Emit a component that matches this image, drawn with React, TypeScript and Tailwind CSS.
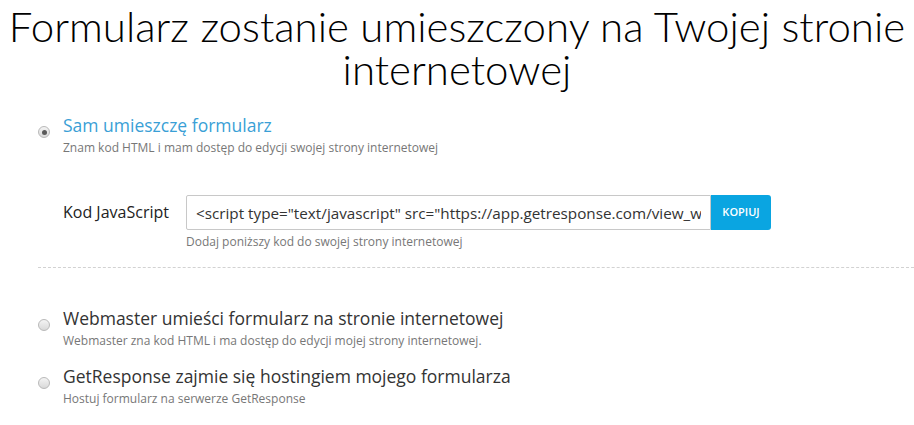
import { useState } from "react";

const options = [
  {
    id: "self",
    label: "Sam umieszczę formularz",
    hint: "Znam kod HTML i mam dostęp do edycji swojej strony internetowej",
  },
  {
    id: "webmaster",
    label: "Webmaster umieści formularz na stronie internetowej",
    hint: "Webmaster zna kod HTML i ma dostęp do edycji mojej strony internetowej.",
  },
  {
    id: "hosting",
    label: "GetResponse zajmie się hostingiem mojego formularza",
    hint: "Hostuj formularz na serwerze GetResponse",
  },
];

const code =
  '<script type="text/javascript" src="https://app.getresponse.com/view_webform_v2.js?u=S&webforms_id=12345"></script>';

const Radio = ({ checked }: { checked: boolean }) => (
  <span className="mt-[12px] flex h-[12px] w-[12px] shrink-0 items-center justify-center rounded-full border border-[#b9b9b9] bg-gradient-to-b from-[#f4f4f4] to-[#d9d9d9]">
    {checked && <span className="h-[5px] w-[5px] rounded-full bg-[#5a5a5a]" />}
  </span>
);

export default function App() {
  const [selected, setSelected] = useState("self");

  return (
    <div className="min-h-screen bg-white font-['Open_Sans',sans-serif] text-[#333]">
      <h1 className="px-2 pt-[5px] text-center font-['Lato',sans-serif] text-[42px] leading-[43px] font-light text-black">
        Formularz zostanie umieszczony na Twojej stronie internetowej
      </h1>

      <div className="mt-[23px] pl-[38px]">
        <label
          className="flex cursor-pointer gap-[13px]"
          onClick={() => setSelected(options[0].id)}
        >
          <Radio checked={selected === options[0].id} />
          <div>
            <div className="text-[17.5px] leading-[22px] text-[#3a9fd6]">
              {options[0].label}
            </div>
            <div className="mt-[4px] text-[12px] leading-[16px] text-[#777]">
              {options[0].hint}
            </div>
          </div>
        </label>

        <div className="mt-[39px] flex items-start">
          <div className="w-[148px] pt-[7px] pl-[25px] text-[16px] leading-[20px] text-[#222]">
            Kod JavaScript
          </div>
          <div>
            <div className="flex">
              <input
                readOnly
                value={code}
                className="h-[35px] w-[525px] rounded-l-[2px] border border-[#c8c8c8] px-[9px] text-[15.25px] text-[#333] outline-none"
              />
              <button className="h-[35px] w-[60px] rounded-r-[3px] bg-[#0aa5e1] text-[11px] font-semibold text-white">
                KOPIUJ
              </button>
            </div>
            <div className="mt-[5px] text-[12px] leading-[14px] text-[#777]">
              Dodaj poniższy kod do swojej strony internetowej
            </div>
          </div>
        </div>

        <div className="mt-[18px] border-t border-dashed border-[#d2d2d2]" />

        <div className="mt-[39px] flex flex-col gap-[16px]">
          {options.slice(1).map((o) => (
            <label
              key={o.id}
              className="flex cursor-pointer gap-[13px]"
              onClick={() => setSelected(o.id)}
            >
              <Radio checked={selected === o.id} />
              <div>
                <div className="text-[17.5px] leading-[22px] text-[#333]">
                  {o.label}
                </div>
                <div className="mt-[4px] text-[12px] leading-[16px] text-[#777]">
                  {o.hint}
                </div>
              </div>
            </label>
          ))}
        </div>
      </div>
    </div>
  );
}
